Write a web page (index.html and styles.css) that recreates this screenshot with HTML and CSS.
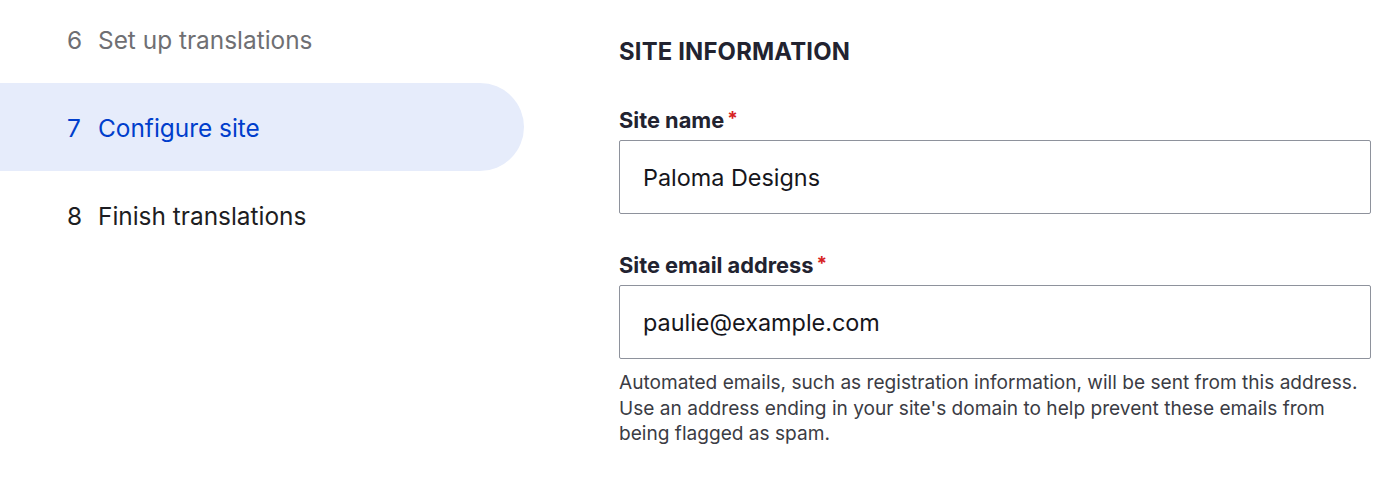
FILE: index.html
```html
<!DOCTYPE html>
<html lang="en">
<head>
<meta charset="utf-8">
<title>Configure site</title>
<link rel="stylesheet" href="styles.css">
</head>
<body>
<div class="page">
  <nav class="steps">
    <ol class="step-list">
      <li class="step step-done"><span class="step-num">6</span><span class="step-label">Set up translations</span></li>
      <li class="step step-active"><span class="step-num">7</span><span class="step-label">Configure site</span></li>
      <li class="step"><span class="step-num">8</span><span class="step-label">Finish translations</span></li>
    </ol>
  </nav>
  <main class="form">
    <h2 class="section-title">SITE INFORMATION</h2>
    <div class="field">
      <label class="field-label">Site name<span class="req">*</span></label>
      <div class="input">Paloma Designs</div>
    </div>
    <div class="field">
      <label class="field-label">Site email address<span class="req">*</span></label>
      <div class="input">paulie@example.com</div>
      <p class="help">Automated emails, such as registration information, will be sent from this address.<br>Use an address ending in your site's domain to help prevent these emails from<br>being flagged as spam.</p>
    </div>
  </main>
</div>
</body>
</html>
```

FILE: styles.css
```css
html, body {
  margin: 0;
  padding: 0;
  background: #ffffff;
}
body {
  font-family: Inter, "Noto Sans", "Liberation Sans", sans-serif;
  color: #222330;
  overflow: hidden;
}
.page {
  display: flex;
  align-items: flex-start;
}
.steps {
  width: 524px;
  flex: none;
  margin-top: -5px;
}
.step-list {
  list-style: none;
  margin: 0;
  padding: 0;
}
.step {
  display: flex;
  align-items: center;
  height: 88px;
  padding-left: 67px;
  padding-top: 2px;
  font-size: 24.4px;
  color: #1d1d22;
  box-sizing: border-box;
}
.step-num {
  width: 31px;
}
.step-done {
  color: #6f6f73;
}
.step-active {
  background: #e6ecfb;
  color: #003ecc;
  border-radius: 0 44px 44px 0;
}
.form {
  margin-left: 95px;
  width: 752px;
  padding-top: 38px;
}
.section-title {
  margin: 0 0 41px;
  font-size: 23.8px;
  line-height: 28px;
  font-weight: 700;
  letter-spacing: 0.2px;
}
.field {
  margin-bottom: 38px;
}
.field-label {
  display: block;
  font-size: 21.8px;
  font-weight: 700;
  line-height: 24px;
  margin-bottom: 8px;
}
.req {
  color: #d72222;
  margin-left: 3px;
  font-size: 19px;
  vertical-align: 3px;
}
.input {
  box-sizing: border-box;
  height: 74px;
  border: 1px solid #8e929c;
  border-radius: 2px;
  padding: 0 23px;
  display: flex;
  align-items: center;
  font-size: 23.4px;
  color: #16161c;
}
.help {
  margin: 11px 0 0;
  font-size: 19.1px;
  line-height: 25.5px;
  color: #3b3c44;
}
```
